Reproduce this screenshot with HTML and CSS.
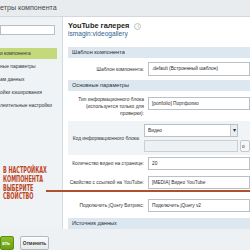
FILE: index.html
```html
<!DOCTYPE html>
<html lang="ru">
<head>
  <meta charset="UTF-8">
  <title>Параметры компонента</title>
  <link rel="stylesheet" href="styles.css">
</head>
<body>
  <div class="topbar">етры компонента</div>

  <div class="main">
    <div class="sidebar">
      <input type="text" class="search">
      <ul class="menu">
        <li class="menu-item active">и компонента</li>
        <li class="menu-item">ные параметры</li>
        <li class="menu-item">ам данных</li>
        <li class="menu-item">ойки кэширования</li>
        <li class="menu-item">лнительные настройки</li>
      </ul>
    </div>

    <div class="content">
      <div class="title">YouTube галерея <span class="info">i</span></div>
      <div class="subtitle">ismagin:videogallery</div>

      <div class="section first">Шаблон компонента</div>
      <div class="row r-template">
        <div class="label">Шаблон компонента:</div>
        <div class="field"><div class="input big">.default (Встроенный шаблон)</div></div>
      </div>

      <div class="section">Основные параметры</div>
      <div class="row r-type">
        <div class="label">Тип информационного блока<br>(используется только для<br>проверки):</div>
        <div class="field"><div class="input">[portfolio] Портфолио</div></div>
      </div>
      <div class="row shaded">
        <div class="label">Код информационного блока:</div>
        <div class="field">
          <div class="select">Видео<span class="arrow">▾</span></div>
          <div class="extra">
            <div class="input disabled"></div>
            <div class="ok">о</div>
          </div>
        </div>
      </div>
      <div class="row r-count">
        <div class="label">Количество видео на странице:</div>
        <div class="field"><div class="input">20</div></div>
      </div>
      <div class="row r-prop">
        <div class="label">Свойство с ссылкой на YouTube:</div>
        <div class="field"><div class="input">[MEDIA] Видео YouTube</div></div>
      </div>
      <div class="row r-jquery">
        <div class="label">Подключить jQuery Битрикс:</div>
        <div class="field"><div class="input">Подключить jQuery v2</div></div>
      </div>

      <div class="section">Источник данных</div>
    </div>
  </div>

  <div class="footer">
    <button class="btn btn-save">ать</button>
    <button class="btn btn-cancel">Отменить</button>
  </div>

  <!-- callout over the screenshot -->
  <div class="note">В настройках<br>компонента<br>выберите<br>свойство</div>
  <div class="note-line"></div>
</body>
</html>
```

FILE: styles.css
```css
body {
  margin: 0;
  width: 250px;
  height: 250px;
  overflow: hidden;
  position: relative;
  font-family: "Liberation Sans", Arial, sans-serif;
  font-size: 5px;
  color: #333;
  background-color: #eef1f4;
}

.topbar {
  height: 16px;
  line-height: 16px;
  font-size: 7.1px;
  color: #44484c;
  background-color: #e9ecee;
  border-bottom: 1px solid #d3d8dc;
  white-space: nowrap;
}

.main {
  display: flex;
  height: 212px;
}

.sidebar {
  width: 57px;
  padding-right: 5px;
  background-color: #eff3f6;
  border-right: 1px solid #d4dbe1;
}

.search {
  display: block;
  width: 55px;
  height: 10px;
  margin: 8px 0 0;
  padding: 0;
  box-sizing: border-box;
  border: 1px solid #b8bfc5;
  background-color: #fff;
}

.menu {
  list-style: none;
  margin: 13px 0 0;
  padding: 0;
}

.menu-item {
  height: 13px;
  line-height: 13px;
  font-size: 4.9px;
  color: #2f3337;
  white-space: nowrap;
}

.menu-item.active {
  height: 11px;
  line-height: 11px;
  margin-bottom: 1px;
  background-color: #c4d97c;
}

.content {
  flex: 1;
  padding: 5px 0 0 5px;
  background-color: #fff;
  overflow: hidden;
}

.title {
  font-size: 7.4px;
  font-weight: bold;
  color: #1e1e1e;
  line-height: 8px;
  white-space: nowrap;
}

.info {
  display: inline-block;
  width: 5px;
  height: 5px;
  margin-left: 3px;
  border: 1px solid #b8c0c8;
  border-radius: 50%;
  font-size: 4.5px;
  font-weight: normal;
  line-height: 5px;
  text-align: center;
  color: #9aa3ab;
  vertical-align: middle;
}

.subtitle {
  font-size: 6.6px;
  color: #2f5f8e;
  line-height: 8px;
  white-space: nowrap;
}

.section {
  height: 11px;
  line-height: 11px;
  padding-left: 4px;
  font-size: 5.6px;
  color: #2b2f33;
  background-color: #dde7f0;
  white-space: nowrap;
}

.section.first {
  margin-top: 9px;
}

.row {
  display: flex;
  align-items: center;
}

.r-template {
  padding: 4px 0;
}

.r-type {
  align-items: flex-start;
  padding: 5px 0 4px;
}

.r-type .field {
  padding-top: 1px;
}

.row.shaded {
  padding: 3px 0;
  background-color: #f0f4f7;
}

.r-count {
  padding: 2px 0 3px;
}

.r-prop {
  padding: 3px 0 4px;
}

.r-jquery {
  padding: 6px 0;
}

.label {
  width: 76px;
  padding-right: 4px;
  text-align: right;
  font-size: 4.9px;
  line-height: 7px;
  color: #333;
  white-space: nowrap;
}

.field {
  flex: 1;
}

.input,
.select {
  height: 13px;
  line-height: 11px;
  box-sizing: border-box;
  padding-left: 3px;
  border: 1px solid #b9c0c6;
  background-color: #fff;
  font-size: 4.8px;
  color: #2b2b2b;
  white-space: nowrap;
}

.input.big {
  height: 14px;
  line-height: 12px;
}

.select {
  position: relative;
  width: 94px;
}

.arrow {
  position: absolute;
  right: 0;
  top: 0;
  width: 6px;
  height: 11px;
  border-left: 1px solid #c4cad0;
  background-color: #eceff1;
  text-align: center;
  font-size: 5.5px;
}

.extra {
  display: flex;
  margin-top: 3px;
}

.input.disabled {
  width: 94px;
  height: 12px;
  background-color: #eef1f3;
  border-color: #c9cfd4;
}

.ok {
  margin-left: 2px;
  width: 10px;
  height: 12px;
  line-height: 11px;
  box-sizing: border-box;
  border: 1px solid #c2c8cd;
  border-radius: 2px;
  background-color: #f6f7f8;
  padding-left: 1px;
  font-size: 4.8px;
}

.footer {
  display: flex;
  gap: 6px;
  padding-top: 7px;
  height: 14px;
  background-color: #eef1f4;
}

.btn {
  height: 14px;
  padding: 0;
  border-radius: 2px;
  font-family: "Liberation Sans", Arial, sans-serif;
  font-size: 4.8px;
  font-weight: bold;
  cursor: pointer;
}

.btn-save {
  width: 14px;
  text-align: right;
  padding-right: 3px;
  color: #fff;
  border: 1px solid #5f8c16;
  background: linear-gradient(#8cc02a, #6a9e17);
}

.btn-cancel {
  width: 29px;
  color: #333;
  border: 1px solid #b3b9be;
  background: linear-gradient(#fbfcfc, #e4e8ea);
}

.note {
  position: absolute;
  left: 3px;
  top: 166px;
  font-family: "DejaVu Sans", "Liberation Sans", sans-serif;
  font-size: 8.2px;
  font-weight: bold;
  line-height: 8.8px;
  text-transform: uppercase;
  color: #c0441b;
  white-space: nowrap;
  transform: scaleX(0.6);
  transform-origin: left top;
}

.note-line {
  position: absolute;
  left: 46px;
  right: 0;
  top: 190px;
  height: 2px;
  background-color: #b0502e;
}
```
